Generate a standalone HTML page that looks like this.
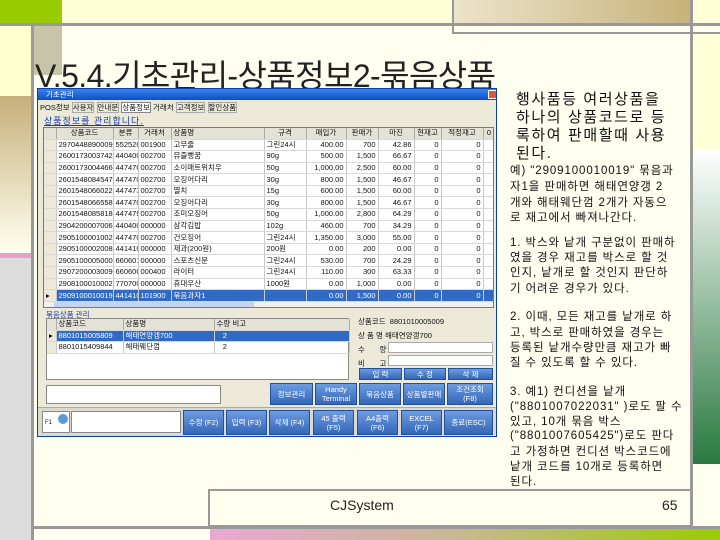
<!DOCTYPE html>
<html><head><meta charset="utf-8">
<style>
*{margin:0;padding:0;box-sizing:border-box}
body{width:720px;height:540px;overflow:hidden;background:#fffff0;position:relative;font-family:"Liberation Sans","Noto Sans CJK KR",sans-serif;color:#111}
.a{position:absolute}
.rt{position:absolute;left:510px;white-space:nowrap;color:#111}
.big{font-size:15px;letter-spacing:1.6px;line-height:18px;left:516px}
.sm{font-size:11.5px;letter-spacing:0.9px;line-height:14px}
.win{position:absolute;left:37px;top:88px;width:460px;height:349px;background:#ece9d8;border:1px solid #0a3fa8;overflow:hidden;font-size:7.5px}
.win .a{white-space:nowrap}
table{border-collapse:collapse;table-layout:fixed;font-size:7.5px}
td{height:11.6px;border-right:1px solid #c8c8c8;border-bottom:1px solid #d8d8d8;padding:0 2px;white-space:nowrap;overflow:hidden;line-height:10px}
td.r{text-align:right}
tr.h td{background:#e4e2d6;height:11px;border-right:1px solid #aaa;text-align:center}
tr.s td{background:#316ac5;color:#fff}
td.i{background:#ece9d8}
.btn{position:absolute;background:linear-gradient(#6d9be0,#3467b8);color:#fff;border:1px solid #24509a;text-align:center;font-size:7.5px;line-height:9px;display:flex;align-items:center;justify-content:center}
</style></head><body>
<div class="a" style="left:0;top:0;width:720px;height:23px;background:#ffffd8"></div>
<div class="a" style="left:0;top:0;width:62px;height:23px;background:#99cc00"></div>
<div class="a" style="left:452px;top:0;width:238px;height:23px;background:linear-gradient(90deg,#ece4cc,#c8b27a)"></div>
<div class="a" style="left:0;top:23px;width:720px;height:3px;background:#999"></div>
<div class="a" style="left:452px;top:32px;width:268px;height:2px;background:#999"></div>
<div class="a" style="left:452px;top:0;width:2px;height:34px;background:#999"></div>
<div class="a" style="left:0;top:26px;width:31px;height:70px;background:#ffffd0"></div>
<div class="a" style="left:0;top:96px;width:31px;height:157px;background:linear-gradient(#c6b07a,#fffff0)"></div>
<div class="a" style="left:0;top:253px;width:31px;height:5px;background:#e6a2c8"></div>
<div class="a" style="left:0;top:258px;width:31px;height:282px;background:#dcdcdc"></div>
<div class="a" style="left:31px;top:26px;width:3px;height:514px;background:#999"></div>
<div class="a" style="left:34px;top:26px;width:28px;height:49px;background:#c8c4a8"></div>
<div class="a" style="left:690px;top:0;width:3px;height:540px;background:#999"></div>
<div class="a" style="left:693px;top:34px;width:27px;height:116px;background:#ffffd8"></div>
<div class="a" style="left:693px;top:150px;width:27px;height:314px;background:linear-gradient(#ffffff,#2a7a40)"></div>
<div class="a" style="left:208px;top:489px;width:485px;height:38px;border:2px solid #999;border-right:none"></div>
<div class="a" style="left:34px;top:526px;width:686px;height:3px;background:#999"></div>
<div class="a" style="left:210px;top:529px;width:510px;height:11px;background:linear-gradient(90deg,#e8a8d4,#c8b890,#99cc00)"></div>
<div class="a" style="left:330px;top:497px;font-size:14px;color:#222">CJSystem</div>
<div class="a" style="left:662px;top:497px;font-size:14px;color:#222">65</div>

<div class="a" style="left:35px;top:51px;font-size:32px;color:#222;white-space:nowrap;letter-spacing:-0.6px">V.5.4.기초관리-상품정보2-묶음상품</div>

<div class="rt big" style="top:91px">행사품등 여러상품을</div>
<div class="rt big" style="top:109px">하나의 상품코드로 등</div>
<div class="rt big" style="top:127px">록하여 판매할때 사용</div>
<div class="rt big" style="top:145px">된다.</div>
<div class="rt sm" style="top:164px">예) "2909100010019" 묶음과</div>
<div class="rt sm" style="top:180px">자1을 판매하면 해태연양갱 2</div>
<div class="rt sm" style="top:196px">개와 해태웨단껌 2개가 자동으</div>
<div class="rt sm" style="top:211px">로 재고에서 빠져나간다.</div>
<div class="rt sm" style="top:236px">1. 박스와 낱개 구분없이 판매하</div>
<div class="rt sm" style="top:251px">였을 경우 재고를 박스로 할 것</div>
<div class="rt sm" style="top:266px">인지, 낱개로 할 것인지 판단하</div>
<div class="rt sm" style="top:282px">기 어려운 경우가 있다.</div>
<div class="rt sm" style="top:310px">2. 이때, 모든 재고를 낱개로 하</div>
<div class="rt sm" style="top:326px">고, 박스로 판매하였을 경우는</div>
<div class="rt sm" style="top:341px">등록된 낱개수량만큼 재고가 빠</div>
<div class="rt sm" style="top:356px">질 수 있도록 할 수 있다.</div>
<div class="rt sm" style="top:385px">3. 예1) 컨디션을 낱개</div>
<div class="rt sm" style="top:400px">("8801007022031" )로도 팔 수</div>
<div class="rt sm" style="top:415px">있고, 10개 묶음 박스</div>
<div class="rt sm" style="top:429px">("8801007605425")로도 판다</div>
<div class="rt sm" style="top:445px">고 가정하면 컨디션 박스코드에</div>
<div class="rt sm" style="top:460px">낱개 코드를 10개로 등록하면</div>
<div class="rt sm" style="top:475px">된다.</div>

<div class="win">
<div class="a" style="left:0;top:0;width:460px;height:11px;background:linear-gradient(#3a84ea,#0a50c8);color:#fff;padding-left:8px;line-height:11px">기초관리</div>
<div class="a" style="left:450px;top:1px;width:9px;height:9px;background:#d85a3a;border:1px solid #fff"></div>
<div class="a" style="left:2px;top:14px;line-height:10px">POS정보 <span style="border:1px solid #aaa">사용자</span> <span style="border:1px solid #aaa">안내문</span> <span style="background:#fff;border:1px solid #888">상품정보</span> 거래처 <span style="border:1px solid #aaa">고객정보</span> <span style="border:1px solid #aaa">할인상품</span></div>
<div class="a" style="left:6px;top:25px;color:#1a3aa8;text-decoration:underline;font-size:9px;letter-spacing:1px">상품정보를 관리합니다.</div>
<div class="a" style="left:5px;top:38px;width:451px;height:181px;background:#fff;border:1px solid #7a7a7a;overflow:hidden">
<table style="width:451px">
<colgroup><col style="width:12px"><col style="width:57px"><col style="width:25px"><col style="width:33px"><col style="width:93px"><col style="width:42px"><col style="width:40px"><col style="width:32px"><col style="width:36px"><col style="width:27px"><col style="width:42px"><col style="width:12px"></colgroup>
<tr class="h"><td></td><td>상품코드</td><td>분류</td><td>거래처</td><td style="text-align:left">상품명</td><td>규격</td><td>매입가</td><td>판매가</td><td>마진</td><td>현재고</td><td>적정재고</td><td>0</td></tr>
<tr><td class="i"></td><td>2970448890009</td><td>552520</td><td>001900</td><td>고무줄</td><td>그린24시</td><td class="r">400.00</td><td class="r">700</td><td class="r">42.86</td><td class="r">0</td><td class="r">0</td><td></td></tr>
<tr><td class="i"></td><td>2600173003742</td><td>440400</td><td>002700</td><td>뮤즐뻥꿈</td><td>90g</td><td class="r">500.00</td><td class="r">1,500</td><td class="r">66.67</td><td class="r">0</td><td class="r">0</td><td></td></tr>
<tr><td class="i"></td><td>2600173004466</td><td>447470</td><td>002700</td><td>소이매트위치우</td><td>50g</td><td class="r">1,000.00</td><td class="r">2,500</td><td class="r">60.00</td><td class="r">0</td><td class="r">0</td><td></td></tr>
<tr><td class="i"></td><td>2601548084547</td><td>447470</td><td>002700</td><td>오징어다리</td><td>30g</td><td class="r">800.00</td><td class="r">1,500</td><td class="r">46.67</td><td class="r">0</td><td class="r">0</td><td></td></tr>
<tr><td class="i"></td><td>2601548066022</td><td>447473</td><td>002700</td><td>멸치</td><td>15g</td><td class="r">600.00</td><td class="r">1,500</td><td class="r">60.00</td><td class="r">0</td><td class="r">0</td><td></td></tr>
<tr><td class="i"></td><td>2601548066558</td><td>447470</td><td>002700</td><td>오징어다리</td><td>30g</td><td class="r">800.00</td><td class="r">1,500</td><td class="r">46.67</td><td class="r">0</td><td class="r">0</td><td></td></tr>
<tr><td class="i"></td><td>2601548085818</td><td>447479</td><td>002700</td><td>조미오징어</td><td>50g</td><td class="r">1,000.00</td><td class="r">2,800</td><td class="r">64.29</td><td class="r">0</td><td class="r">0</td><td></td></tr>
<tr><td class="i"></td><td>2904200007006</td><td>440400</td><td>000000</td><td>삼각김밥</td><td>102g</td><td class="r">460.00</td><td class="r">700</td><td class="r">34.29</td><td class="r">0</td><td class="r">0</td><td></td></tr>
<tr><td class="i"></td><td>2905100001002</td><td>447470</td><td>002700</td><td>건오징어</td><td>그린24시</td><td class="r">1,350.00</td><td class="r">3,000</td><td class="r">55.00</td><td class="r">0</td><td class="r">0</td><td></td></tr>
<tr><td class="i"></td><td>2905100002008</td><td>441410</td><td>000000</td><td>제과(200원)</td><td>200원</td><td class="r">0.00</td><td class="r">200</td><td class="r">0.00</td><td class="r">0</td><td class="r">0</td><td></td></tr>
<tr><td class="i"></td><td>2905100005000</td><td>660601</td><td>000000</td><td>스포츠신문</td><td>그린24시</td><td class="r">530.00</td><td class="r">700</td><td class="r">24.29</td><td class="r">0</td><td class="r">0</td><td></td></tr>
<tr><td class="i"></td><td>2907200003009</td><td>660600</td><td>000400</td><td>라이터</td><td>그린24시</td><td class="r">110.00</td><td class="r">300</td><td class="r">63.33</td><td class="r">0</td><td class="r">0</td><td></td></tr>
<tr><td class="i"></td><td>2908100010002</td><td>770700</td><td>000000</td><td>휴대우산</td><td>1000원</td><td class="r">0.00</td><td class="r">1,000</td><td class="r">0.00</td><td class="r">0</td><td class="r">0</td><td></td></tr>
<tr class="s"><td class="i" style="background:#ece9d8;color:#000">▸</td><td>2909100010019</td><td>441410</td><td>101900</td><td>묶음과자1</td><td></td><td class="r">0.00</td><td class="r">1,500</td><td class="r">0.00</td><td class="r">0</td><td class="r">0</td><td></td></tr>
</table>
<div class="a" style="left:0;top:174px;width:451px;height:6px;background:#f0f0f0"></div>
<div class="a" style="left:10px;top:174px;width:200px;height:6px;background:#c4d4f0"></div>
</div>
<div class="a" style="left:8px;top:220px;color:#1a3aa8">묶음상품 관리</div>
<div class="a" style="left:8px;top:229px;width:303px;height:62px;background:#fff;border:1px solid #888">
<table style="width:302px">
<colgroup><col style="width:9px"><col style="width:67px"><col style="width:91px"><col style="width:135px"></colgroup>
<tr class="h"><td></td><td style="text-align:left">상품코드</td><td style="text-align:left">상품명</td><td style="text-align:left">수량 비고</td></tr>
<tr class="s"><td class="i" style="background:#ece9d8;color:#000">▸</td><td>8801015005809</td><td>해태연양갱700</td><td>&nbsp;&nbsp;&nbsp;2</td></tr>
<tr><td class="i"></td><td>8801015409844</td><td>해태웨단껌</td><td>&nbsp;&nbsp;&nbsp;2</td></tr>
</table></div>
<div class="a" style="left:320px;top:226px;line-height:14px">상품코드&nbsp; 8801010005009<br>상 품 명 해태연양갱700<br>수&nbsp;&nbsp;&nbsp;&nbsp;&nbsp;&nbsp; 량<br>비&nbsp;&nbsp;&nbsp;&nbsp;&nbsp;&nbsp; 고</div>
<div class="a" style="left:350px;top:253px;width:105px;height:11px;background:#fff;border:1px solid #aaa"></div>
<div class="a" style="left:350px;top:266px;width:105px;height:11px;background:#fff;border:1px solid #aaa"></div>
<div class="btn" style="left:321px;top:279px;width:43px;height:12px">입 력</div>
<div class="btn" style="left:366px;top:279px;width:42px;height:12px">수 정</div>
<div class="btn" style="left:410px;top:279px;width:45px;height:12px">삭 제</div>
<div class="a" style="left:8px;top:296px;width:175px;height:19px;background:#fff;border:1px solid #888"></div>
<div class="btn" style="left:232px;top:294px;width:43px;height:22px">정보관리</div>
<div class="btn" style="left:277px;top:294px;width:42px;height:22px">Handy<br>Terminal</div>
<div class="btn" style="left:321px;top:294px;width:42px;height:22px">묶음상품</div>
<div class="btn" style="left:365px;top:294px;width:42px;height:22px">상품별판매</div>
<div class="btn" style="left:409px;top:294px;width:46px;height:22px">조건조회<br>(F8)</div>
<div class="a" style="left:0;top:318px;width:460px;height:31px;background:#dcdad0;border-top:1px solid #aaa"></div>
<div class="a" style="left:4px;top:322px;width:28px;height:22px;background:#fff;border:1px solid #888;font-size:6px;padding:8px 0 0 2px">F1</div>
<div class="a" style="left:20px;top:325px;width:10px;height:10px;background:#5a9ad8;border-radius:50%"></div>
<div class="a" style="left:33px;top:322px;width:110px;height:22px;background:#fff;border:1px solid #888"></div>
<div class="btn" style="left:145px;top:321px;width:41px;height:25px">수정 (F2)</div>
<div class="btn" style="left:188px;top:321px;width:41px;height:25px">입력 (F3)</div>
<div class="btn" style="left:231px;top:321px;width:41px;height:25px">삭제 (F4)</div>
<div class="btn" style="left:275px;top:321px;width:41px;height:25px">45 출력<br>(F5)</div>
<div class="btn" style="left:319px;top:321px;width:41px;height:25px">A4출력<br>(F6)</div>
<div class="btn" style="left:363px;top:321px;width:41px;height:25px">EXCEL<br>(F7)</div>
<div class="btn" style="left:406px;top:321px;width:49px;height:25px">종료(ESC)</div>
</div>
</body></html>
